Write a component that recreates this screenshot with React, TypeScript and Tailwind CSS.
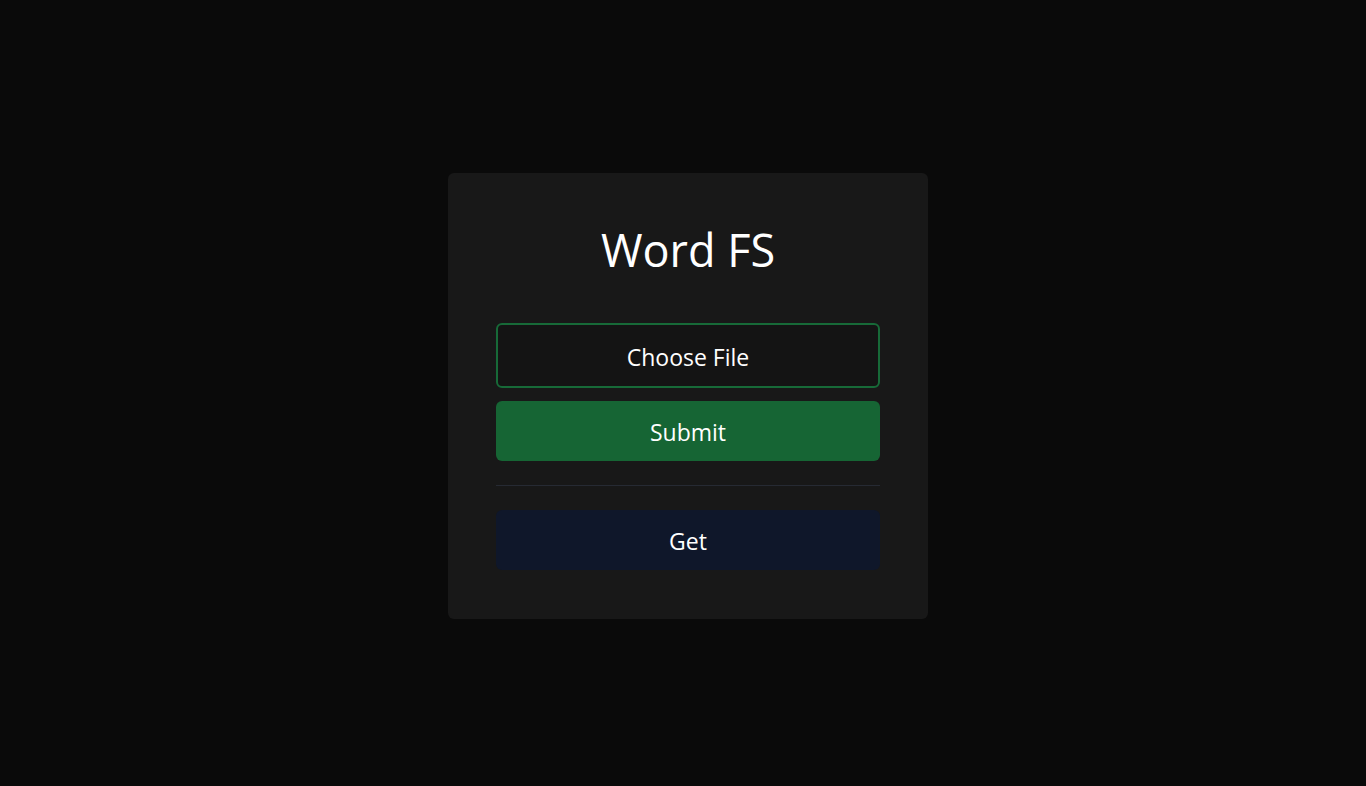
export default function App() {
  return (
    <div className="min-h-screen w-full bg-[#0a0a0a] flex items-center justify-center font-['Open_Sans',sans-serif]">
      <div className="w-[480px] bg-[#181818] rounded-md px-12 pt-12 pb-[49px] flex flex-col ml-[10px] mt-[5px]">
        <h1 className="text-center text-white text-[45px] leading-[48px] mt-[5px] mb-[49px]">Word FS</h1>

        <label className="h-[65px] pt-1 border-2 border-[#176a38] rounded-md bg-[#141414] flex items-center justify-center text-white text-[23px] cursor-pointer">
          Choose File
          <input type="file" className="hidden" />
        </label>

        <button className="mt-[13px] h-[60px] pt-1 rounded-md bg-[#166534] text-white text-[23px]">
          Submit
        </button>

        <div className="my-6 h-px bg-[#262a33]" />

        <button className="h-[60px] pt-1 rounded-md bg-[#0f172a] text-white text-[23px]">
          Get
        </button>
      </div>
    </div>
  );
}
